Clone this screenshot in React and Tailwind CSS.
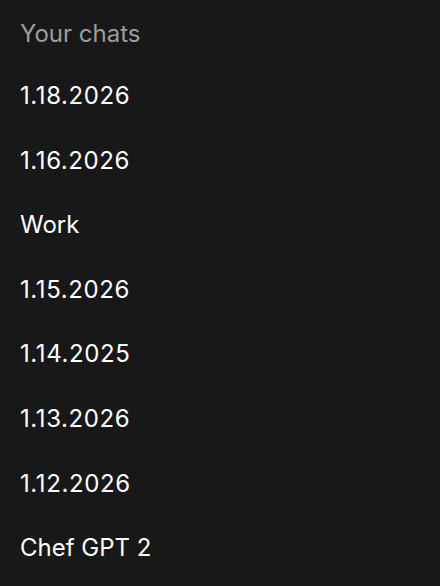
import React from "react";

const chats = [
  "1.18.2026",
  "1.16.2026",
  "Work",
  "1.15.2026",
  "1.14.2025",
  "1.13.2026",
  "1.12.2026",
  "Chef GPT 2",
];

const isDate = (s) => /^[\d.]+$/.test(s);

export default function App() {
  return (
    <div
      className="w-[440px] h-[586px] overflow-hidden bg-[#181818] px-5"
      style={{ fontFamily: "Inter, 'Noto Sans', sans-serif" }}
    >
      <div className="h-[63.7px] flex items-center pt-[4px] text-[24px] text-[#9d9d9d]">
        Your chats
      </div>
      {chats.map((c) => (
        <div
          key={c}
          className={
            isDate(c)
              ? "h-[64.6px] flex items-center text-[24px] text-white tracking-[0.6px]"
              : "h-[64.6px] flex items-center text-[24px] text-white"
          }
        >
          {c}
        </div>
      ))}
    </div>
  );
}
